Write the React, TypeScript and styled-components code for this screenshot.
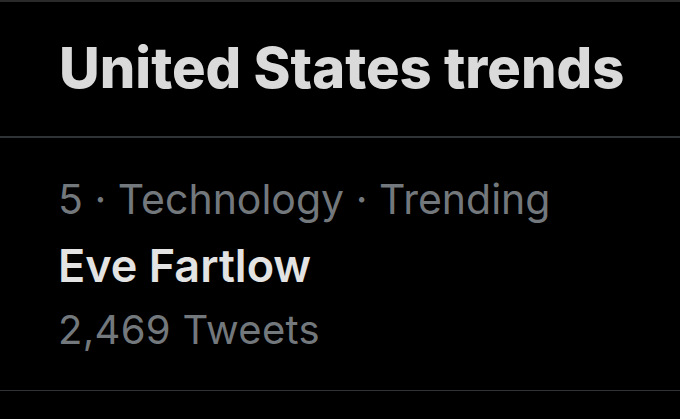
import React from "react";
import styled, { createGlobalStyle } from "styled-components";

const Global = createGlobalStyle`
  html, body { margin: 0; padding: 0; background: #000; }
  body { font-family: Inter, "Noto Sans", sans-serif; -webkit-font-smoothing: antialiased; }
`;

const Panel = styled.div`
  width: 680px;
  height: 419px;
  background: #000;
  border-top: 2px solid #2a2a2a;
  box-sizing: border-box;
  overflow: hidden;
`;

const Header = styled.div`
  height: 136px;
  box-sizing: border-box;
  padding: 38px 0 0 59px;
  border-bottom: 2px solid #2f3336;
`;

const Title = styled.h1`
  margin: 0;
  font-size: 56px;
  line-height: 56px;
  font-weight: 800;
  color: #dadada;
  letter-spacing: 0;
`;

const TrendRow = styled.div`
  height: 253px;
  box-sizing: border-box;
  padding: 31px 0 0 58px;
  display: flex;
  flex-direction: column;
  border-bottom: 1px solid #2f3336;
`;

const Line = styled.div<{ $color: string; $size: number; $weight: number; $lh: number; $ls?: number }>`
  font-size: ${(p) => p.$size}px;
  font-weight: ${(p) => p.$weight};
  color: ${(p) => p.$color};
  line-height: ${(p) => p.$lh}px;
  height: ${(p) => p.$lh}px;
  letter-spacing: ${(p) => p.$ls ?? 0}px;
  white-space: nowrap;
`;

export default function App() {
  return (
    <>
      <Global />
      <Panel>
        <Header>
          <Title>United States trends</Title>
        </Header>
        <TrendRow>
          <Line $color="#73787d" $size={41} $weight={400} $lh={60}>5 · Technology · Trending</Line>
          <Line $color="#e3e3e3" $size={45} $weight={600} $lh={73}>Eve Fartlow</Line>
          <Line $color="#73787d" $size={40} $weight={400} $lh={55} $ls={0.3}>2,469 Tweets</Line>
        </TrendRow>
      </Panel>
    </>
  );
}
